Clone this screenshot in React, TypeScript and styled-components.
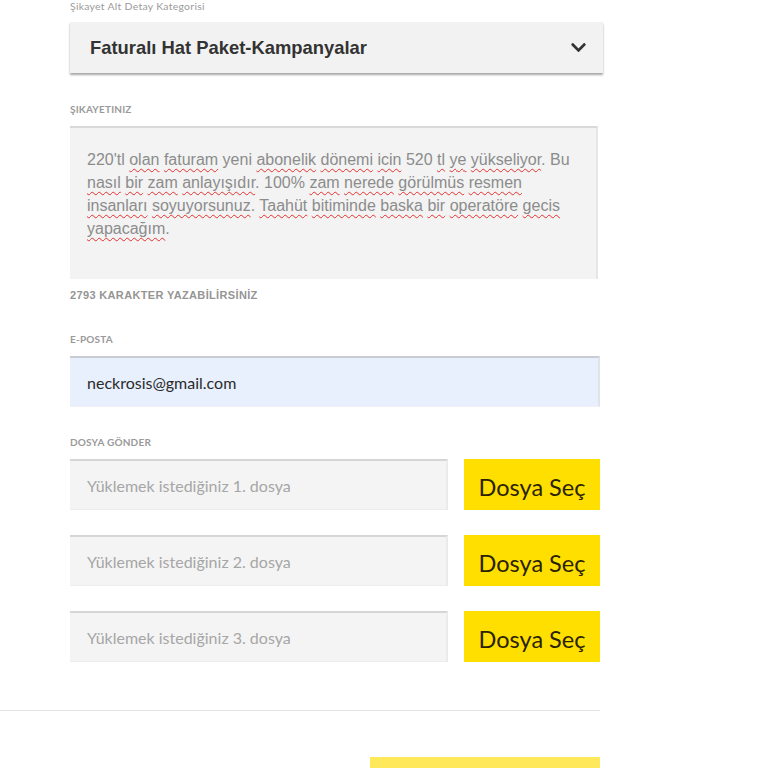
import styled, { createGlobalStyle } from "styled-components";
import { FC } from "react";
import { FaChevronDown } from "react-icons/fa";

const GlobalStyle = createGlobalStyle`
  html, body {
    margin: 0;
    padding: 0;
    background: #fff;
  }
  body {
    font-family: "Liberation Sans", Arial, sans-serif;
  }
`;

const Page = styled.div`
  width: 600px;
  display: flex;
  flex-direction: column;
`;

const Form = styled.form`
  padding-left: 70px;
  display: flex;
  flex-direction: column;
`;

const Field = styled.div<{ $top?: number }>`
  display: flex;
  flex-direction: column;
  margin-top: ${(p) => p.$top ?? 0}px;
`;

const Label = styled.label<{ $caps?: boolean; $gap?: number }>`
  font-family: "Lato", sans-serif;
  font-size: ${(p) => (p.$caps ? "10px" : "10.4px")};
  line-height: 12px;
  font-weight: ${(p) => (p.$caps ? 700 : 400)};
  text-transform: ${(p) => (p.$caps ? "uppercase" : "none")};
  color: #9a9a9a;
  margin-bottom: ${(p) => p.$gap ?? 11}px;
  letter-spacing: ${(p) => (p.$caps ? "0.2px" : "0.3px")};
`;

const Select = styled.div`
  width: 533px;
  height: 51px;
  box-sizing: border-box;
  background: #f2f2f2;
  box-shadow: 0 2px 2px rgba(0, 0, 0, 0.35);
  display: flex;
  align-items: center;
  justify-content: space-between;
  padding: 0 16px 0 20px;
  font-family: "Liberation Sans", Arial, sans-serif;
  font-weight: 700;
  font-size: 18.4px;
  color: #333;
`;

const TextBox = styled.div`
  width: 528px;
  height: 153px;
  box-sizing: border-box;
  background: #f3f3f3;
  border-top: 2px solid #d9d9d9;
  border-right: 2px solid #e6e6e6;
  padding: 20px 16px 0 17px;
  font-family: "Liberation Sans", Arial, sans-serif;
  font-size: 16px;
  line-height: 23px;
  color: #8c8c8c;
`;

const Misspelled = styled.span`
  text-decoration: underline wavy #e53030;
  text-decoration-thickness: 1px;
  text-underline-offset: 3px;
`;

const Counter = styled.div`
  margin-top: 10px;
  font-family: "Liberation Sans", Arial, sans-serif;
  font-weight: 700;
  font-size: 11px;
  line-height: 12px;
  letter-spacing: 0.35px;
  color: #959595;
`;

const Input = styled.div<{ $filled?: boolean; $width: number }>`
  width: ${(p) => p.$width}px;
  height: 51px;
  box-sizing: border-box;
  background: ${(p) => (p.$filled ? "#e8f0fe" : "#f4f4f4")};
  border-top: 2px solid ${(p) => (p.$filled ? "#c9ccd2" : "#d6d6d6")};
  border-right: 2px solid ${(p) => (p.$filled ? "#dfe4ec" : "#ebebeb")};
  border-bottom: 1px solid ${(p) => (p.$filled ? "#eef2f8" : "#ececec")};
  display: flex;
  align-items: center;
  padding-left: 17px;
  font-family: "Lato", sans-serif;
  font-size: 16px;
  color: ${(p) => (p.$filled ? "#2a2a2a" : "#a6a6a6")};
`;

const FileRows = styled.div`
  display: flex;
  flex-direction: column;
  gap: 25px;
`;

const FileRow = styled.div`
  display: flex;
  gap: 16px;
`;

const YellowButton = styled.button<{ $width: number; $light?: boolean }>`
  width: ${(p) => p.$width}px;
  height: 51px;
  border: none;
  background: ${(p) => (p.$light ? "#ffe95a" : "#ffdf00")};
  font-family: "Lato", sans-serif;
  font-size: 23.5px;
  color: #2a2200;
  padding: 4px 0 0;
  cursor: pointer;
`;

const Divider = styled.hr`
  width: 600px;
  margin: 48px 0 0;
  border: none;
  border-top: 1px solid #e4e4e4;
`;

const Footer = styled.div`
  display: flex;
  justify-content: flex-end;
  margin-top: 46px;
`;

const complaint: [string, boolean][] = [
  ["220'tl", false],
  ["olan", true],
  ["faturam", true],
  ["yeni", false],
  ["abonelik", true],
  ["dönemi", true],
  ["icin", true],
  ["520", false],
  ["tl", true],
  ["ye", true],
  ["yükseliyor", true],
  ["Bu", false],
  ["nasıl", true],
  ["bir", true],
  ["zam", true],
  ["anlayışıdır", true],
  ["100%", false],
  ["zam", true],
  ["nerede", true],
  ["görülmüs", true],
  ["resmen", true],
  ["insanları", true],
  ["soyuyorsunuz", true],
  ["Taahüt", true],
  ["bitiminde", true],
  ["baska", true],
  ["bir", true],
  ["operatöre", true],
  ["gecis", true],
  ["yapacağım", true],
];

const punct: Record<number, string> = { 10: ".", 15: ".", 22: ".", 29: "." };

const App: FC = () => {
  return (
    <Page>
      <GlobalStyle />
      <Form onSubmit={(e) => e.preventDefault()}>
        <Field>
          <Label $gap={10}>Şikayet Alt Detay Kategorisi</Label>
          <Select>
            <span>Faturalı Hat Paket-Kampanyalar</span>
            <FaChevronDown size={17} color="#333" />
          </Select>
        </Field>
        <Field $top={30}>
          <Label $caps>Şikayetiniz</Label>
          <TextBox>
            {complaint.map(([word, bad], i) => (
              <span key={i}>
                {bad ? <Misspelled>{word}</Misspelled> : word}
                {punct[i] || ""}
                {i < complaint.length - 1 ? " " : ""}
              </span>
            ))}
          </TextBox>
          <Counter>2793 KARAKTER YAZABİLİRSİNİZ</Counter>
        </Field>
        <Field $top={32}>
          <Label $caps>E-Posta</Label>
          <Input $filled $width={530}>
            neckrosis@gmail.com
          </Input>
        </Field>
        <Field $top={29}>
          <Label $caps>Dosya Gönder</Label>
          <FileRows>
            {[1, 2, 3].map((n) => (
              <FileRow key={n}>
                <Input $width={378}>Yüklemek istediğiniz {n}. dosya</Input>
                <YellowButton type="button" $width={136}>
                  Dosya Seç
                </YellowButton>
              </FileRow>
            ))}
          </FileRows>
        </Field>
      </Form>
      <Divider />
      <Footer>
        <YellowButton type="submit" $width={230} $light />
      </Footer>
    </Page>
  );
};

export default App;
